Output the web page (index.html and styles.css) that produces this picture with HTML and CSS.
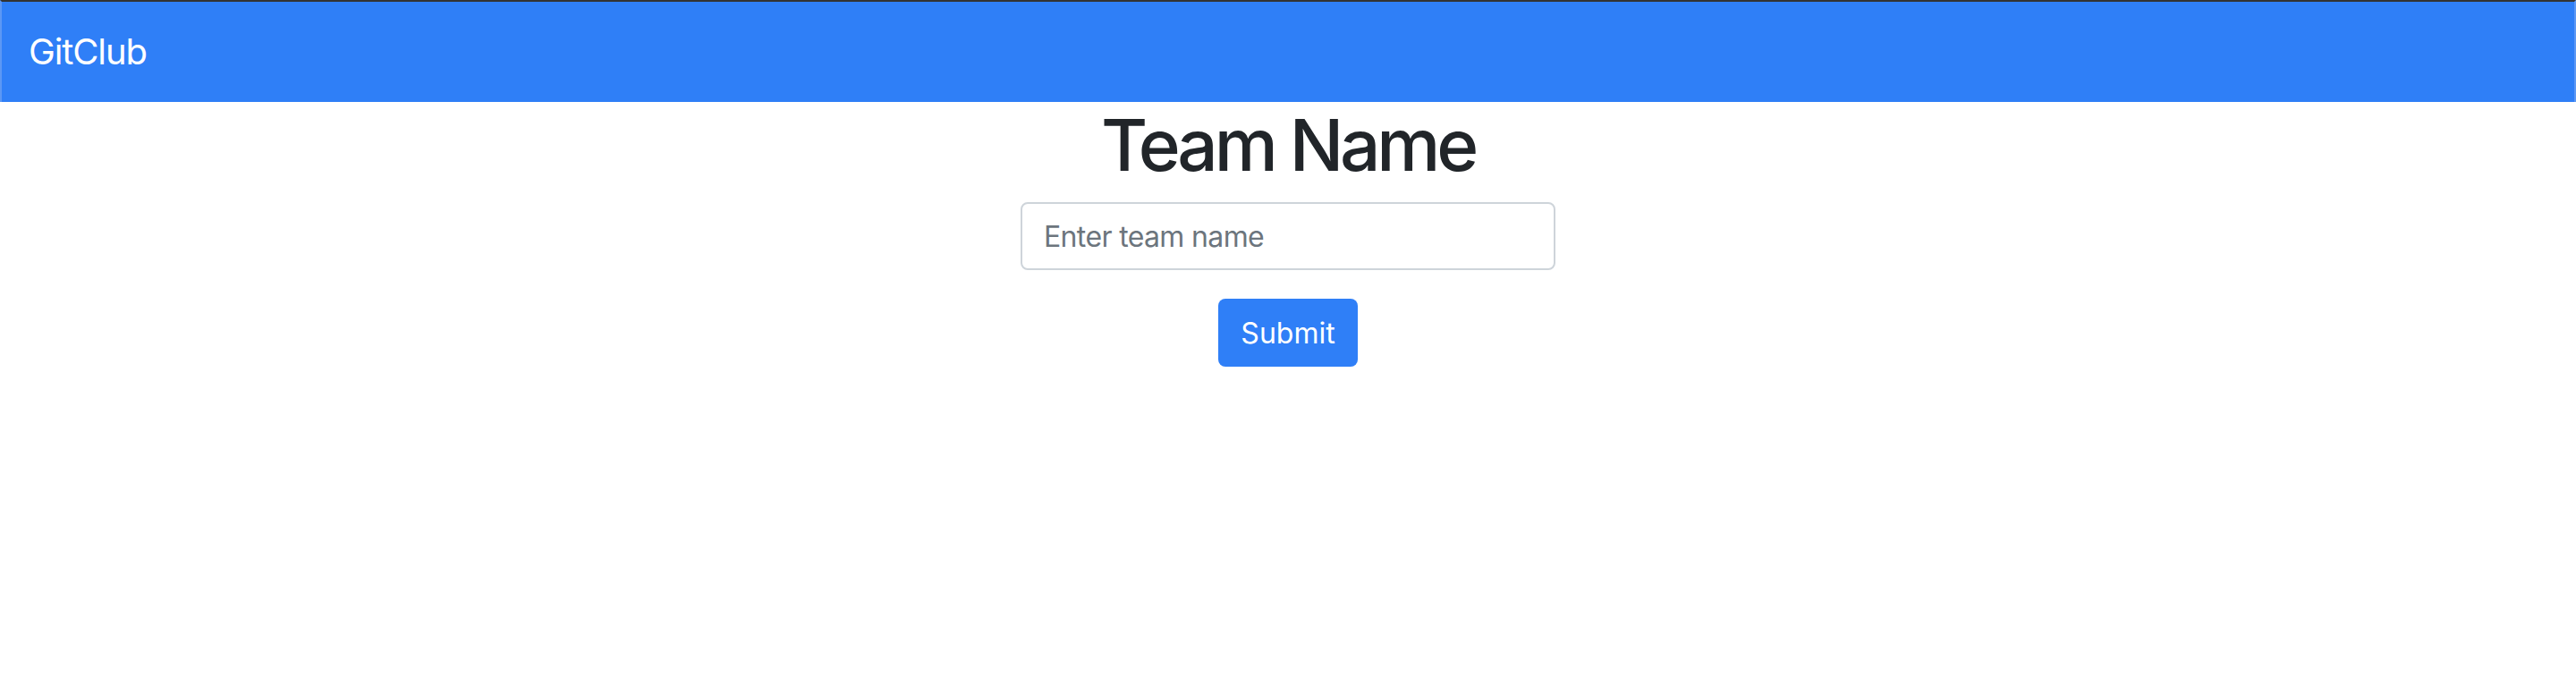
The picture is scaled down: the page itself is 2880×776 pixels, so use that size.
FILE: index.html
```html
<!DOCTYPE html>
<html lang="en">
<head>
<meta charset="utf-8">
<title>GitClub</title>
<link rel="stylesheet" href="styles.css">
</head>
<body>
<header class="navbar">
  <a class="brand" href="#">GitClub</a>
</header>
<main class="content">
  <h1 class="title">Team Name</h1>
  <form class="team-form">
    <input class="field" type="text" placeholder="Enter team name">
    <button class="btn" type="button">Submit</button>
  </form>
</main>
</body>
</html>
```

FILE: styles.css
```css
html, body {
  margin: 0;
  padding: 0;
  background: #ffffff;
}

body {
  font-family: Inter, "Liberation Sans", sans-serif;
  color: #212529;
}

.navbar {
  height: 112px;
  border-top: 2px solid #333333;
  border-left: 2px solid #5c97f4;
  border-right: 2px solid #5c97f4;
  background: #2f7ff7;
  display: flex;
  align-items: center;
  padding: 0 30px;
}

.brand {
  color: #ffffff;
  text-decoration: none;
  font-size: 40px;
  line-height: 60px;
  font-weight: 400;
  letter-spacing: -0.028em;
}

.content {
  display: flex;
  flex-direction: column;
  align-items: center;
}

.title {
  margin: 0 0 16px;
  font-size: 80px;
  line-height: 96px;
  font-weight: 500;
  letter-spacing: -0.052em;
  color: #212529;
}

.team-form {
  display: flex;
  flex-direction: column;
  align-items: center;
  gap: 32px;
}

.field {
  box-sizing: border-box;
  width: 598px;
  height: 76px;
  padding: 0 24px;
  border: 2px solid #ced4da;
  border-radius: 8px;
  font-family: inherit;
  font-size: 32px;
  letter-spacing: -0.02em;
  color: #495057;
  outline: none;
}

.field::placeholder {
  color: #6c757d;
}

.btn {
  box-sizing: border-box;
  height: 76px;
  padding: 0 25px;
  border: 0;
  border-radius: 8px;
  background: #2f7ff7;
  color: #ffffff;
  font-family: inherit;
  font-size: 32px;
  cursor: pointer;
}
```
